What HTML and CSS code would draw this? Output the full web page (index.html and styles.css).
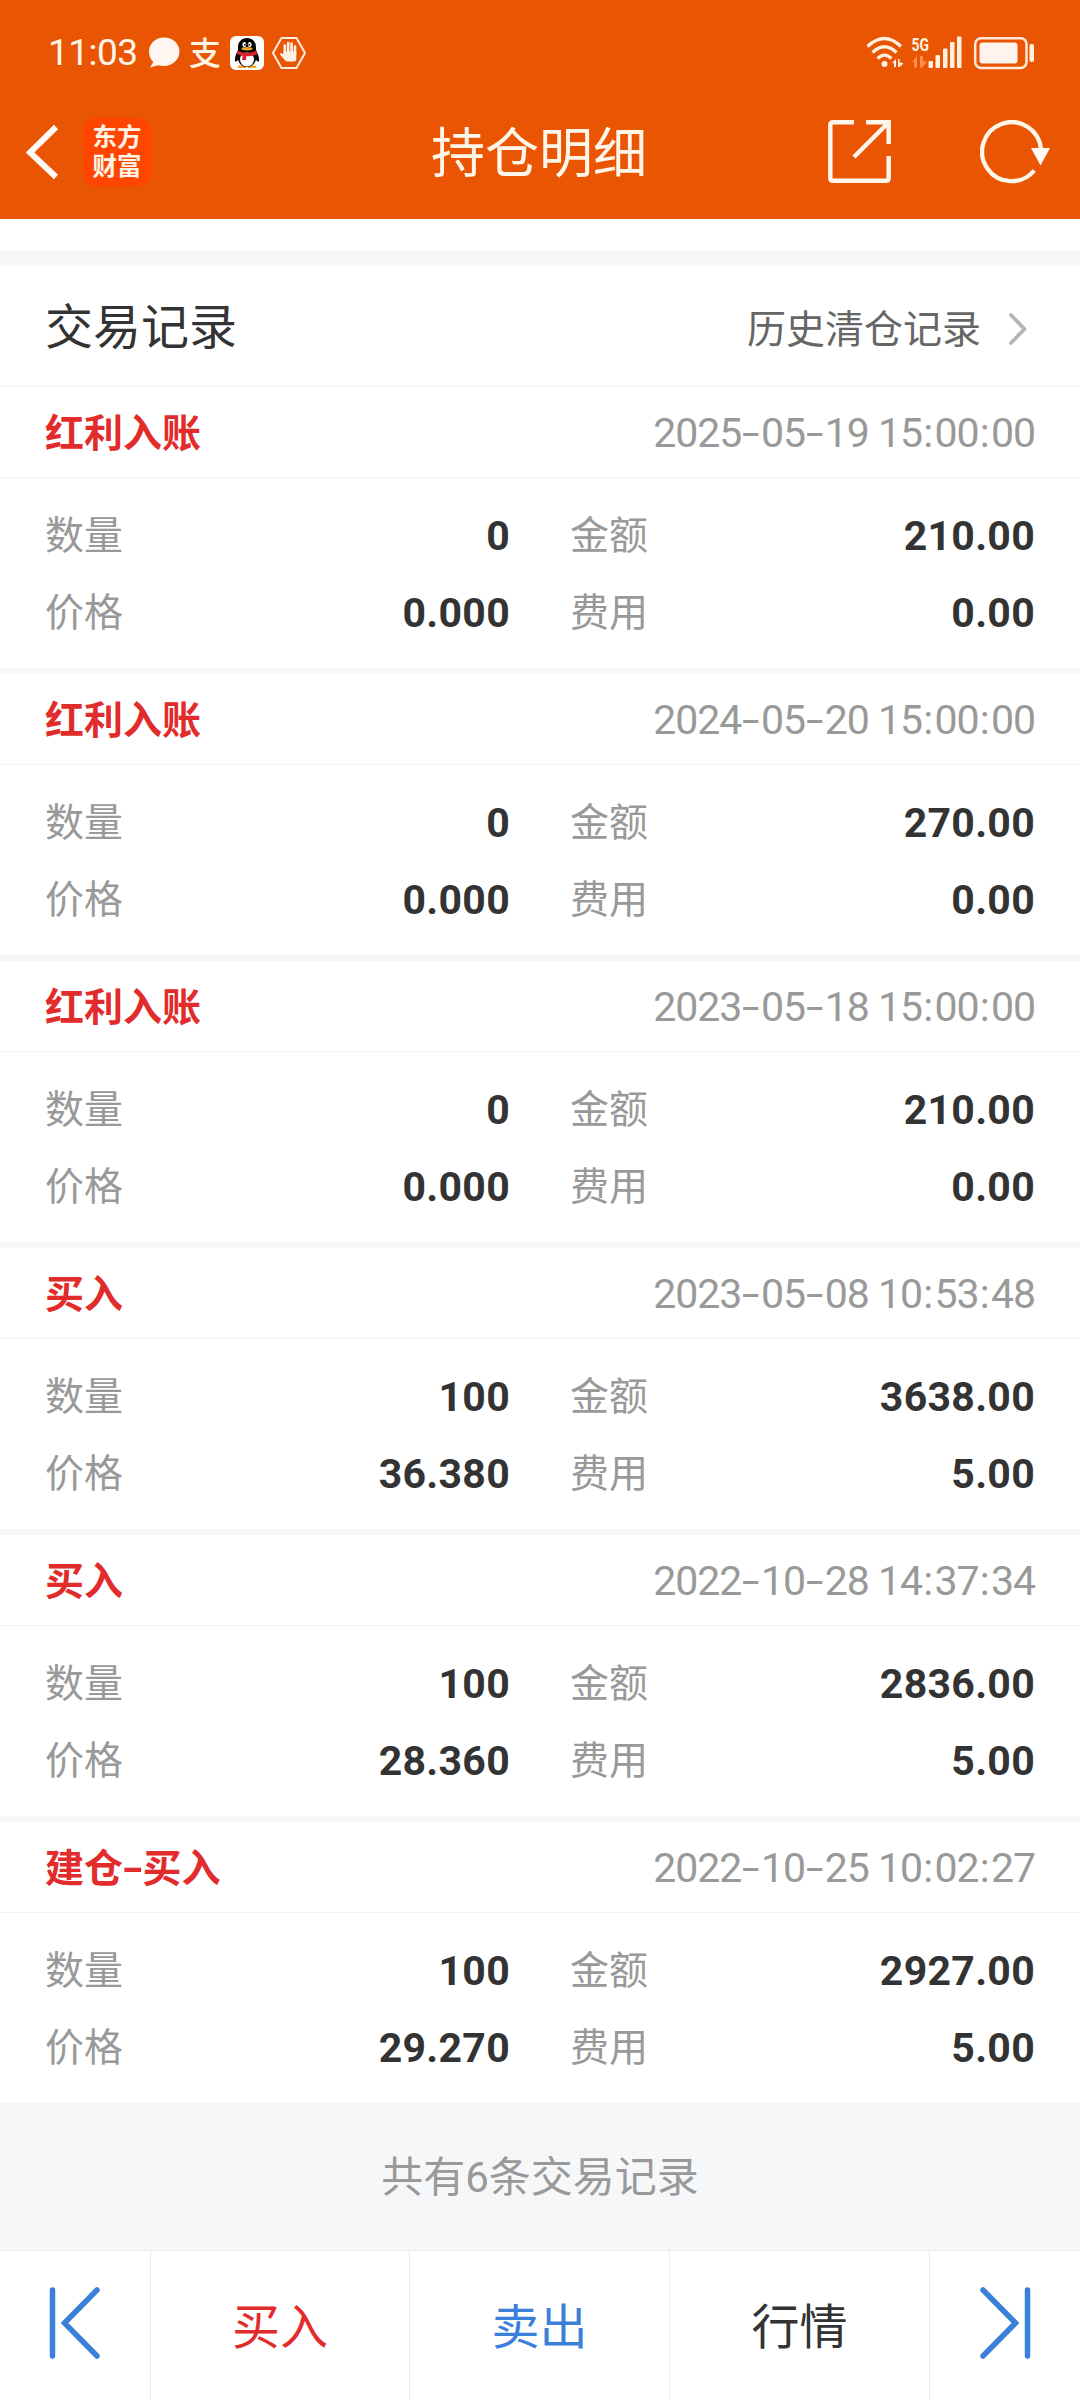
FILE: index.html
```html
<!DOCTYPE html>
<html lang="zh-CN">
<head>
<meta charset="utf-8">
<title>持仓明细</title>
<link rel="stylesheet" href="styles.css">
</head>
<body>
<div class="app">
  <header class="top">
    <div class="status">
      <span class="clock">11:03</span>
      <svg class="bubble" width="32" height="32" viewBox="0 0 32 32"><path d="M16 .5C7.500 .5 1 6.800 1 14.500c0 4.500 1.800 8 4.300 10.500L2 30.500l8-2.300c2 .6 4 .8 6 .8 8.500 0 15.500-6.500 15.500-14.500S24.500 .5 16 .5z" fill="#fff6f2"/></svg>
      <span class="pay">支</span>
      <svg class="qq" width="34" height="34" viewBox="0 0 34 34">
        <rect width="34" height="34" rx="6" fill="#fff"/>
        <path d="M8 29.500h8v2.500H8zM18 29.500h8v2.500h-8z" fill="#f5a623"/>
        <path d="M17 2c-5.500 0-9 4-9 9v3c-1.500 3-3.500 7-3 11 .3 1.500 2 .5 3-1.500C9 28 12.500 31 17 31s8-3 9-7.500c1 2 2.700 3 3 1.500 .5-4-1.500-8-3-11v-3c0-5-3.500-9-9-9z" fill="#050505"/>
        <ellipse cx="17" cy="23.500" rx="7" ry="7" fill="#fff"/>
        <ellipse cx="14.300" cy="8.500" rx="1.900" ry="2.600" fill="#fff"/><ellipse cx="19.700" cy="8.500" rx="1.900" ry="2.600" fill="#fff"/>
        <circle cx="14.900" cy="8.700" r=".9"/><circle cx="19.200" cy="8.700" r=".9"/>
        <ellipse cx="17" cy="12.800" rx="5.500" ry="1.700" fill="#f5a623"/>
        <path d="M7.500 14.500c6 3 13 3 19 0l.7 3.800c-4 1.700-7.500 2-11 2V24h-4l.3-4.200c-2-.4-4-1-5.500-1.800z" fill="#d9232e"/>
      </svg>
      <svg class="hand" width="34" height="34" viewBox="0 0 34 34">
        <path d="M9.500 2h15L33 17l-8.500 15h-15L1 17z" fill="none" stroke="#ffeadd" stroke-width="2" stroke-linejoin="round"/>
        <path d="M12.800 19V9.500M16.200 17V7M19.600 17V7.500M23 19V10.500" stroke="#fff1e6" stroke-width="2.600" stroke-linecap="round"/>
        <path d="M11.500 15.500h12.800V23q0 2.500-2.500 2.500h-6.200q-1.700 0-2.900-1.500L8 18.500q-.6-1.500 1-1.500l2.500 1.500z" fill="#fff1e6"/>
      </svg>
      <span class="spacer"></span>
      <svg class="signals" width="170" height="50" viewBox="0 -8 170 50">
        <g fill="none" stroke="#fff0df" stroke-width="3.200">
          <path d="M2.500 10.500Q19.500-5.500 36 10.500M7.500 16.500Q19.500 5 31.500 16.500M12.500 22.500Q19.500 15.500 26.500 22.500"/>
        </g>
        <circle cx="19.500" cy="28" r="3" fill="#fff0df"/>
        <path d="M27 27l4-4v8h-2v-4zM33 23l1.500 0v3l4 1.500-4 3.500H33z" fill="#fff0df"/>
        <path d="M47 26l5-6v11.500h-3V26zM55 20h3v5.500h4l-5 6h-2z" fill="#ff8f52"/>
        <g fill="#fff0df"><rect x="63.500" y="25" width="4.500" height="7" rx="1"/><rect x="70.500" y="19" width="4.500" height="13" rx="1"/><rect x="78" y="12.500" width="4.500" height="19.500" rx="1"/><rect x="85" y="6" width="4.500" height="26" rx="1"/><rect x="92" y="0.500" width="4.500" height="31.500" rx="1"/></g>
        <rect x="110.200" y="2.200" width="51.300" height="29.800" rx="6" fill="none" stroke="#ffe9d8" stroke-width="2.500"/>
        <rect x="114.500" y="6.500" width="38" height="21" rx="3" fill="#fff3ee"/>
        <rect x="164.500" y="8" width="4.500" height="18" rx="2" fill="#fff0df"/>
        <text x="46.500" y="15" class="net" textLength="17.500" lengthAdjust="spacingAndGlyphs">5G</text>
      </svg>
    </div>
    <div class="nav">
      <div class="nav-left">
        <svg width="33" height="56" viewBox="0 0 33 56"><path d="M30 3L4 28.500l26 24.500" fill="none" stroke="#fffaf5" stroke-width="6"/></svg>
        <div class="logo"><span>东方</span><span>财富</span></div>
      </div>
      <h1 class="nav-title">持仓明细</h1>
      <div class="nav-right">
        <svg width="64" height="64" viewBox="0 0 64 64" fill="none" stroke="#fff6ea" stroke-width="4.500"><path d="M26 2.300H5Q2.300 2.300 2.300 5V58Q2.300 60.700 5 60.700H58Q60.700 60.700 60.700 58V36M38 2.300H60.700V24M26 37L60 3"/></svg>
        <svg width="72" height="64" viewBox="0 0 72 64"><path d="M54.300 50.500A29.500 29.500 0 1 1 61 29" fill="none" stroke="#fff6ea" stroke-width="4.300"/><path d="M51 28h19L60.500 45.500z" fill="#fffaf5"/></svg>
      </div>
    </div>
  </header>
  <div class="strip"></div>
  <main>
    <div class="section">
      <h2>交易记录</h2>
      <a class="history">历史清仓记录<svg width="18" height="34" viewBox="0 0 18 34"><path d="M2 2L15.500 16 2 30" fill="none" stroke="#b5b5b5" stroke-width="3.800" stroke-linecap="round" stroke-linejoin="round"/></svg></a>
    </div>
    <section class="record">
      <div class="head"><b>红利入账</b><time>2025<i class="d">-</i>05<i class="d">-</i>19 15<i class="c">:</i>00<i class="c">:</i>00</time></div>
      <div class="body"><p><span>数量</span><b>0</b></p><p><span>金额</span><b>210.00</b></p><p><span>价格</span><b>0.000</b></p><p><span>费用</span><b>0.00</b></p></div>
    </section>
    <section class="record">
      <div class="head"><b>红利入账</b><time>2024<i class="d">-</i>05<i class="d">-</i>20 15<i class="c">:</i>00<i class="c">:</i>00</time></div>
      <div class="body"><p><span>数量</span><b>0</b></p><p><span>金额</span><b>270.00</b></p><p><span>价格</span><b>0.000</b></p><p><span>费用</span><b>0.00</b></p></div>
    </section>
    <section class="record">
      <div class="head"><b>红利入账</b><time>2023<i class="d">-</i>05<i class="d">-</i>18 15<i class="c">:</i>00<i class="c">:</i>00</time></div>
      <div class="body"><p><span>数量</span><b>0</b></p><p><span>金额</span><b>210.00</b></p><p><span>价格</span><b>0.000</b></p><p><span>费用</span><b>0.00</b></p></div>
    </section>
    <section class="record">
      <div class="head"><b>买入</b><time>2023<i class="d">-</i>05<i class="d">-</i>08 10<i class="c">:</i>53<i class="c">:</i>48</time></div>
      <div class="body"><p><span>数量</span><b>100</b></p><p><span>金额</span><b>3638.00</b></p><p><span>价格</span><b>36.380</b></p><p><span>费用</span><b>5.00</b></p></div>
    </section>
    <section class="record">
      <div class="head"><b>买入</b><time>2022<i class="d">-</i>10<i class="d">-</i>28 14<i class="c">:</i>37<i class="c">:</i>34</time></div>
      <div class="body"><p><span>数量</span><b>100</b></p><p><span>金额</span><b>2836.00</b></p><p><span>价格</span><b>28.360</b></p><p><span>费用</span><b>5.00</b></p></div>
    </section>
    <section class="record">
      <div class="head"><b>建仓<i class="d">-</i>买入</b><time>2022<i class="d">-</i>10<i class="d">-</i>25 10<i class="c">:</i>02<i class="c">:</i>27</time></div>
      <div class="body"><p><span>数量</span><b>100</b></p><p><span>金额</span><b>2927.00</b></p><p><span>价格</span><b>29.270</b></p><p><span>费用</span><b>5.00</b></p></div>
    </section>
  </main>
  <div class="total">共有6条交易记录</div>
  <footer class="tabs">
    <div><svg width="52" height="74" viewBox="0 0 52 74" fill="none" stroke="#3b80d8" stroke-width="5.500" stroke-linecap="round"><path d="M3.500 4V70M48 4L15.500 37 48 70"/></svg></div>
    <div class="buy">买入</div>
    <div class="sell">卖出</div>
    <div>行情</div>
    <div><svg width="52" height="74" viewBox="0 0 52 74" fill="none" stroke="#3b80d8" stroke-width="5.500" stroke-linecap="round"><path d="M48.500 4V70M4 4L36.500 37 4 70"/></svg></div>
  </footer>
</div>
</body>
</html>
```
FILE: styles.css
```css
* { box-sizing: border-box; margin: 0; padding: 0; }
body { width: 1080px; background: #fff; color: #333; font-family: Roboto, "Noto Sans CJK SC", sans-serif; }
.app { display: flex; flex-direction: column; height: 2400px; }
svg { display: block; flex: none; }
i { font-style: normal; }

.top { height: 219px; background: #ea5504; color: #fff6ea; }
.status { display: flex; align-items: center; height: 84px; padding: 22px 44px 0 48px; }
.clock { width: 100px; font-size: 37px; line-height: 60px; letter-spacing: -0.500px; white-space: nowrap; }
.pay { width: 34px; margin-left: 9px; padding-bottom: 4px; font: 500 32px/56px "Noto Sans CJK SC", sans-serif; }
.qq { margin-left: 7px; }
.hand { margin-left: 8px; }
.spacer { flex: 1; }
.signals { margin-right: 1px; }
.net { font: 700 18.500px Roboto, sans-serif; fill: #fff0df; }

.nav { display: grid; grid-template-columns: 1fr auto 1fr; align-items: center; height: 135px; padding: 0 28px 0 26px; }
.nav-left, .nav-right { display: flex; align-items: center; }
.nav-left { gap: 24px; }
.nav-right { justify-content: flex-end; gap: 88px; }
.logo { display: flex; flex-direction: column; align-items: center; justify-content: center; width: 68px; height: 68px; padding-bottom: 3px; border-radius: 13px; background: #ff4500; font: 700 24.500px/29px "Noto Sans CJK SC", sans-serif; }
.nav-title { padding-top: 6px; font-size: 54px; font-weight: 400; line-height: 80px; }

.strip { height: 47px; border-bottom: 15px solid #f6f7f9; }
.section { display: flex; align-items: center; justify-content: space-between; height: 121px; padding: 0 53px 0 45px; border-bottom: 1px solid #f4f4f5; }
.section h2 { padding-top: 3px; font-size: 48px; font-weight: 400; line-height: 70px; }
.history { display: flex; align-items: center; gap: 28px; padding-top: 7px; font-size: 39px; line-height: 58px; color: #666; }

.record { height: 287px; border-bottom: 6px solid #f6f7f9; }
.record:last-child { height: 281px; border-bottom: 0; }
.head { display: flex; align-items: center; justify-content: space-between; height: 91px; padding: 0 45px; border-bottom: 1px solid #f4f4f5; font-size: 39px; line-height: 58px; }
.head b { padding-top: 3px; color: #e22b2b; }
.head time { padding-top: 1px; font-size: 41px; color: #999; letter-spacing: -1px; }
.d { display: inline-block; width: 19.600px; text-align: center; letter-spacing: 0; transform: scaleX(1.550); }
.c { display: inline-block; width: 12.400px; text-align: center; letter-spacing: 0; }
.body { display: grid; grid-template-columns: 1fr 1fr; column-gap: 60px; padding: 19px 45px 0; }
.body p { display: flex; align-items: center; justify-content: space-between; height: 77px; }
.body span { padding-top: 1px; font-size: 39px; line-height: 58px; color: #999; }
.body b { font-size: 41px; line-height: 58px; letter-spacing: 0.300px; }

.total { height: 147px; padding-top: 2px; background: #f6f7f9; color: #999; font-size: 42px; line-height: 145px; text-align: center; }
.tabs { display: grid; grid-template-columns: 151px 259px 260px 260px 150px; height: 150px; border-top: 1px solid #e9eaec; font-size: 48px; }
.tabs > div { display: flex; align-items: center; justify-content: center; padding-bottom: 5px; border-right: 1px solid #ececee; }
.tabs > div:last-child { border-right: 0; }
.tabs .buy { color: #e22b2b; }
.tabs .sell { color: #3b80d8; }
```
